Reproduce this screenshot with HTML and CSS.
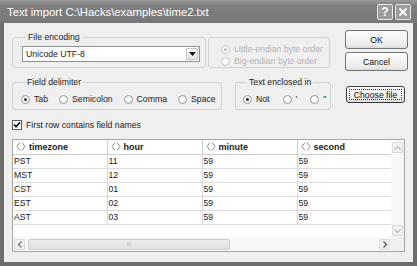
FILE: index.html
```html
<!DOCTYPE html>
<html lang="en">
<head>
    <meta charset="UTF-8">
    <meta name="viewport" content="width=device-width, initial-scale=1.0">
    <title>Text import</title>
    <link rel="stylesheet" href="styles.css">
</head>
<body>
    <div class="window">
        <div class="titlebar">
            <span class="title">Text import C:\Hacks\examples\time2.txt</span>
            <div class="caption-buttons">
                <span class="cap-btn">?</span>
                <span class="cap-btn">
                    <svg width="10" height="10" viewBox="0 0 10 10"><path d="M1.5 1.5 L8.5 8.5 M8.5 1.5 L1.5 8.5" stroke="#fff" stroke-width="2"/></svg>
                </span>
            </div>
        </div>
        <div class="client">
            <div class="top">
                <div class="options">
                    <div class="row">
                        <fieldset class="group group-encoding">
                            <legend>File encoding</legend>
                            <div class="select">
                                <span>Unicode UTF-8</span>
                                <span class="select-btn">
                                    <svg width="7" height="4" viewBox="0 0 7 4"><path d="M0 0 H7 L3.5 4 Z" fill="#111"/></svg>
                                </span>
                            </div>
                        </fieldset>
                        <fieldset class="group group-byteorder">
                            <label class="radio disabled"><span class="dot checked"></span>Little-endian byte order</label>
                            <label class="radio disabled"><span class="dot"></span>Big-endian byte order</label>
                        </fieldset>
                    </div>
                    <div class="row row-delim">
                        <fieldset class="group group-delim">
                            <legend>Field delimiter</legend>
                            <div class="radios">
                                <label class="radio"><span class="dot checked"></span>Tab</label>
                                <label class="radio"><span class="dot"></span>Semicolon</label>
                                <label class="radio"><span class="dot"></span>Comma</label>
                                <label class="radio"><span class="dot"></span>Space</label>
                            </div>
                        </fieldset>
                        <fieldset class="group group-enclosed">
                            <legend>Text enclosed in</legend>
                            <div class="radios">
                                <label class="radio"><span class="dot checked"></span>Not</label>
                                <label class="radio"><span class="dot"></span>'</label>
                                <label class="radio"><span class="dot"></span>"</label>
                            </div>
                        </fieldset>
                    </div>
                    <label class="check">
                        <span class="box">
                            <svg width="8" height="8" viewBox="0 0 8 8"><path d="M1 3.5 L3 5.8 L7 1.2" stroke="#111" stroke-width="1.7" fill="none"/></svg>
                        </span>
                        First row contains field names
                    </label>
                </div>
                <div class="buttons">
                    <button class="btn">OK</button>
                    <button class="btn btn-cancel">Cancel</button>
                    <button class="btn btn-choose"><span class="focus">Choose file</span></button>
                </div>
            </div>
            <div class="grid">
                <div class="grid-main">
                    <table class="data">
                        <colgroup>
                            <col class="c1"><col class="c2"><col class="c3"><col class="c4">
                        </colgroup>
                        <thead>
                            <tr>
                                <th><span class="th"><svg class="th-icon" width="10" height="9" viewBox="0 0 10 9"><path d="M4 0.5 L1 4.5 L4 8.5 M6 0.5 L9 4.5 L6 8.5" stroke="#8a8a8a" fill="none"/></svg>timezone</span></th>
                                <th><span class="th"><svg class="th-icon" width="10" height="9" viewBox="0 0 10 9"><path d="M4 0.5 L1 4.5 L4 8.5 M6 0.5 L9 4.5 L6 8.5" stroke="#8a8a8a" fill="none"/></svg>hour</span></th>
                                <th><span class="th"><svg class="th-icon" width="10" height="9" viewBox="0 0 10 9"><path d="M4 0.5 L1 4.5 L4 8.5 M6 0.5 L9 4.5 L6 8.5" stroke="#8a8a8a" fill="none"/></svg>minute</span></th>
                                <th><span class="th"><svg class="th-icon" width="10" height="9" viewBox="0 0 10 9"><path d="M4 0.5 L1 4.5 L4 8.5 M6 0.5 L9 4.5 L6 8.5" stroke="#8a8a8a" fill="none"/></svg>second</span></th>
                            </tr>
                        </thead>
                        <tbody>
                            <tr><td>PST</td><td>11</td><td>59</td><td>59</td></tr>
                            <tr><td>MST</td><td>12</td><td>59</td><td>59</td></tr>
                            <tr><td>CST</td><td>01</td><td>59</td><td>59</td></tr>
                            <tr><td>EST</td><td>02</td><td>59</td><td>59</td></tr>
                            <tr><td>AST</td><td>03</td><td>59</td><td>59</td></tr>
                        </tbody>
                    </table>
                    <div class="hscroll">
                        <span class="sb-btn">
                            <svg width="6" height="7" viewBox="0 0 6 7"><path d="M4.5 0.5 L1.5 3.5 L4.5 6.5" stroke="#777" stroke-width="1.3" fill="none"/></svg>
                        </span>
                        <span class="thumb"><span class="grip">III</span></span>
                        <span class="track"></span>
                        <span class="sb-btn">
                            <svg width="6" height="7" viewBox="0 0 6 7"><path d="M1.5 0.5 L4.5 3.5 L1.5 6.5" stroke="#555" stroke-width="1.3" fill="none"/></svg>
                        </span>
                    </div>
                </div>
                <div class="vscroll">
                    <span class="sb-btn">
                        <svg width="7" height="6" viewBox="0 0 7 6"><path d="M0.5 4.5 L3.5 1.5 L6.5 4.5" stroke="#bbb" stroke-width="1.2" fill="none"/></svg>
                    </span>
                    <span class="vtrack"></span>
                    <span class="sb-btn">
                        <svg width="7" height="6" viewBox="0 0 7 6"><path d="M0.5 1.5 L3.5 4.5 L6.5 1.5" stroke="#bbb" stroke-width="1.2" fill="none"/></svg>
                    </span>
                    <span class="corner"></span>
                </div>
            </div>
        </div>
    </div>
</body>
</html>
```

FILE: styles.css
```css
* {
    box-sizing: border-box;
}
body {
    margin: 0;
    font-family: "Liberation Sans", Arial, sans-serif;
    font-size: 8.7px;
    color: #222;
    background: #fff;
}
.window {
    width: 417px;
    height: 266px;
    display: flex;
    flex-direction: column;
    background: #6c6c6c;
}
.titlebar {
    height: 23px;
    flex: none;
    display: flex;
    align-items: center;
    justify-content: space-between;
    padding: 0 6px 0 7px;
    background: linear-gradient(#9a9a9a, #7e7e7e 25%, #787878);
    color: #fff;
}
.title {
    font-size: 11.3px;
}
.caption-buttons {
    display: flex;
    gap: 2px;
}
.cap-btn {
    width: 16px;
    height: 16px;
    border: 1px solid #e6e6e6;
    border-radius: 2px;
    background: #9c9c9c;
    color: #fff;
    display: flex;
    align-items: center;
    justify-content: center;
    font-weight: bold;
    font-size: 12px;
}
.client {
    flex: 1;
    margin: 0 4px 4px;
    background: #efefef;
    padding: 7px 8px 10px;
    display: flex;
    flex-direction: column;
}
.top {
    display: flex;
    align-items: flex-start;
}
.options {
    width: 319px;
    margin-top: 2px;
}
.row {
    display: flex;
    align-items: flex-start;
}
.group {
    margin: 0;
    border: 1px solid #d2d2d2;
    border-radius: 3px;
    min-width: 0;
}
.group legend {
    padding: 0 2px;
    margin-left: 4px;
    line-height: 11px;
}
.group-encoding {
    width: 194px;
    padding: 3px 5px 5px 9px;
}
.select {
    width: 178px;
    height: 16px;
    border: 1px solid #8f8f8f;
    background: #fff;
    display: flex;
    align-items: center;
    justify-content: space-between;
    padding: 0 1px 0 3px;
}
.select-btn {
    width: 12px;
    height: 12px;
    border: 1px solid #c4c4c4;
    border-radius: 1px;
    background: linear-gradient(#fafafa, #e2e2e2);
    display: flex;
    align-items: center;
    justify-content: center;
}
.group-byteorder {
    width: 122px;
    margin-left: 2px;
    margin-top: 5px;
    padding: 5px 4px 0 12px;
}
.radio {
    display: flex;
    align-items: center;
    gap: 4px;
    height: 12px;
    white-space: nowrap;
}
.dot {
    width: 9px;
    height: 9px;
    border-radius: 50%;
    border: 1px solid #9a9a9a;
    background: radial-gradient(#fff 40%, #e4e4e4);
    display: flex;
    align-items: center;
    justify-content: center;
}
.dot.checked::after {
    content: "";
    width: 3px;
    height: 3px;
    border-radius: 50%;
    background: #222;
}
.radio.disabled {
    color: #b4b4b4;
}
.radio.disabled .dot {
    border-color: #cdcdcd;
}
.radio.disabled .dot.checked::after {
    background: #b8b8b8;
}
.row-delim {
    margin-top: 9px;
}
.radios {
    display: flex;
    gap: 11px;
}
.group-delim {
    width: 210px;
    padding: 5px 4px 4px 8px;
}
.group-enclosed {
    width: 96px;
    margin-left: 13px;
    padding: 5px 4px 4px 7px;
}
.group-enclosed .radios {
    gap: 13px;
}
.check {
    display: flex;
    align-items: center;
    gap: 4px;
    margin-top: 9px;
    height: 12px;
}
.box {
    width: 10px;
    height: 10px;
    border: 1px solid #5c5c5c;
    background: #fff;
    display: flex;
    align-items: center;
    justify-content: center;
}
.buttons {
    display: flex;
    flex-direction: column;
    margin-left: 14px;
}
.btn {
    width: 63px;
    height: 19px;
    border: 1px solid #747474;
    border-radius: 3px;
    background: linear-gradient(#fdfdfd, #ececec 80%, #dcdcdc);
    font: inherit;
    color: #111;
    padding: 0;
}
.btn-cancel {
    margin-top: 3px;
}
.btn-choose {
    margin-top: 15px;
    margin-left: 1px;
    width: 59px;
    height: 17px;
    border-color: #3c3c3c;
    padding: 2px;
}
.focus {
    display: flex;
    align-items: center;
    justify-content: center;
    height: 100%;
    border: 1px dotted #333;
}
.grid {
    flex: 1;
    margin-top: 8px;
    display: flex;
    border: 1px solid #a6a6a6;
    background: #fff;
}
.grid-main {
    flex: 1;
    display: flex;
    flex-direction: column;
    justify-content: space-between;
    min-width: 0;
}
.data {
    width: 378px;
    table-layout: fixed;
    border-collapse: collapse;
}
.c1 { width: 94px; }
.c2 { width: 95px; }
.c3 { width: 95px; }
.c4 { width: 94px; }
.data th {
    height: 14px;
    padding: 0 0 0 3px;
    text-align: left;
    font-size: 9px;
    border-right: 1px solid #cfcfcf;
    border-bottom: 1px solid #cfcfcf;
}
.th {
    display: flex;
    align-items: center;
    gap: 3px;
}
.data td {
    height: 14px;
    padding: 0 0 0 1px;
    border-right: 1px solid #d6d6d6;
    border-bottom: 1px solid #dcdcdc;
    line-height: 12px;
}
.hscroll {
    height: 14px;
    display: flex;
    align-items: center;
    padding: 0 1px;
    background: #f7f7f7;
}
.sb-btn {
    width: 11px;
    height: 11px;
    border: 1px solid #dadada;
    border-radius: 1px;
    background: #f0f0f0;
    display: flex;
    align-items: center;
    justify-content: center;
}
.thumb {
    width: 202px;
    height: 11px;
    margin-left: 3px;
    border: 1px solid #cccccc;
    border-radius: 2px;
    background: linear-gradient(#ececec, #e0e0e0);
    display: flex;
    align-items: center;
    justify-content: center;
}
.grip {
    font-size: 5px;
    color: #b8b8b8;
}
.track {
    flex: 1;
}
.vscroll {
    width: 13px;
    display: flex;
    flex-direction: column;
    align-items: center;
    padding-top: 2px;
    background: #f7f7f7;
}
.vtrack {
    flex: 1;
}
.corner {
    height: 14px;
    width: 13px;
    margin-top: 1px;
    background: #efefef;
}
```
